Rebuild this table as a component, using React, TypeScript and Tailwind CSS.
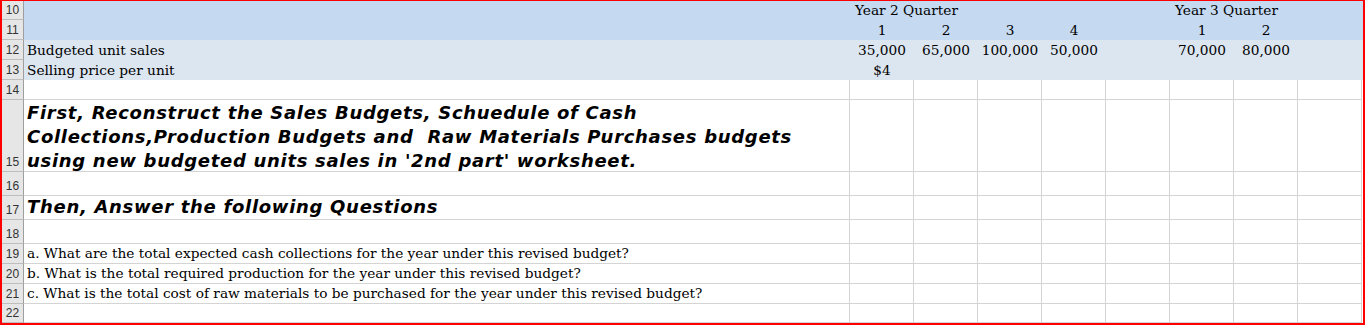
import type { ReactNode } from "react";

const serif = "font-['DejaVu_Serif',serif] text-[13.7px] leading-[16px] text-black";
const bold = "font-['DejaVu_Sans',sans-serif] text-[18px] leading-[24px] tracking-[0.7px] font-bold italic text-black";

function RowNum({ n }: { n: number }) {
  return (
    <div className="flex w-[22px] shrink-0 items-end justify-center border-r border-b border-r-[#9e9e9e] border-b-[#bdbdbd] bg-[#e6e6e6] pb-[3px] font-['Liberation_Sans',sans-serif] text-[12px] leading-[12px] text-[#333]">
      {n}
    </div>
  );
}

// filled header rows: no gridlines, text may spill over neighbours
function FillRow({ n, h, bg, a, cells }: { n: number; h: string; bg: string; a?: ReactNode; cells?: ReactNode[] }) {
  return (
    <div className={`flex ${h} ${bg}`}>
      <RowNum n={n} />
      <div className={`flex w-[826px] shrink-0 items-end pb-[2px] pl-[3px] ${serif}`}>{a}</div>
      {Array.from({ length: 8 }).map((_, i) => (
        <div key={i} className={`flex w-[64px] shrink-0 items-end justify-center whitespace-nowrap pb-[2px] ${serif}`}>
          {cells?.[i]}
        </div>
      ))}
    </div>
  );
}

function GridRow({ n, h, children, aClass }: { n: number; h: string; children?: ReactNode; aClass?: string }) {
  return (
    <div className={`flex ${h}`}>
      <RowNum n={n} />
      <div className={`flex w-[826px] shrink-0 items-end border-r border-b border-[#d4d4d4] pl-[3px] ${aClass ?? ""}`}>
        {children}
      </div>
      {Array.from({ length: 8 }).map((_, i) => (
        <div key={i} className="w-[64px] shrink-0 border-r border-b border-[#d4d4d4]" />
      ))}
    </div>
  );
}

export default function App() {
  return (
    <div className="h-[325px] w-[1365px] overflow-hidden border-t border-r-2 border-b-2 border-l-2 border-[#ff0000] bg-white">
      <FillRow
        n={10}
        h="h-[19px]"
        bg="bg-[#c5d9f1]"
        cells={[
          <span className="w-full pl-[5px] text-left">Year 2 Quarter</span>,
          null,
          null,
          null,
          null,
          <span className="w-full pl-[5px] text-left">Year 3 Quarter</span>,
        ]}
      />
      <FillRow n={11} h="h-[20px]" bg="bg-[#c5d9f1]" cells={["1", "2", "3", "4", null, "1", "2"]} />
      <FillRow
        n={12}
        h="h-[20px]"
        bg="bg-[#dce6f1]"
        a="Budgeted unit sales"
        cells={["35,000", "65,000", "100,000", "50,000", null, "70,000", "80,000"]}
      />
      <FillRow n={13} h="h-[20px]" bg="bg-[#dce6f1]" a="Selling price per unit" cells={["$4"]} />
      <GridRow n={14} h="h-[20px]" />
      <GridRow n={15} h="h-[72px]" aClass={bold}>
        <p className="mb-[-2px] whitespace-pre">
          First, Reconstruct the Sales Budgets, Schuedule of Cash
          <br />
          Collections,Production Budgets and  Raw Materials Purchases budgets
          <br />
          using new budgeted units sales in '2nd part' worksheet.
        </p>
      </GridRow>
      <GridRow n={16} h="h-[24px]" />
      <GridRow n={17} h="h-[24px]" aClass={bold}>
        <p>Then, Answer the following Questions</p>
      </GridRow>
      <GridRow n={18} h="h-[24px]" />
      <GridRow n={19} h="h-[20px]" aClass={`pb-[2px] ${serif}`}>
        a. What are the total expected cash collections for the year under this revised budget?
      </GridRow>
      <GridRow n={20} h="h-[20px]" aClass={`pb-[2px] ${serif}`}>
        b. What is the total required production for the year under this revised budget?
      </GridRow>
      <GridRow n={21} h="h-[20px]" aClass={`pb-[2px] ${serif}`}>
        c. What is the total cost of raw materials to be purchased for the year under this revised budget?
      </GridRow>
      <GridRow n={22} h="h-[19px]" />
    </div>
  );
}
